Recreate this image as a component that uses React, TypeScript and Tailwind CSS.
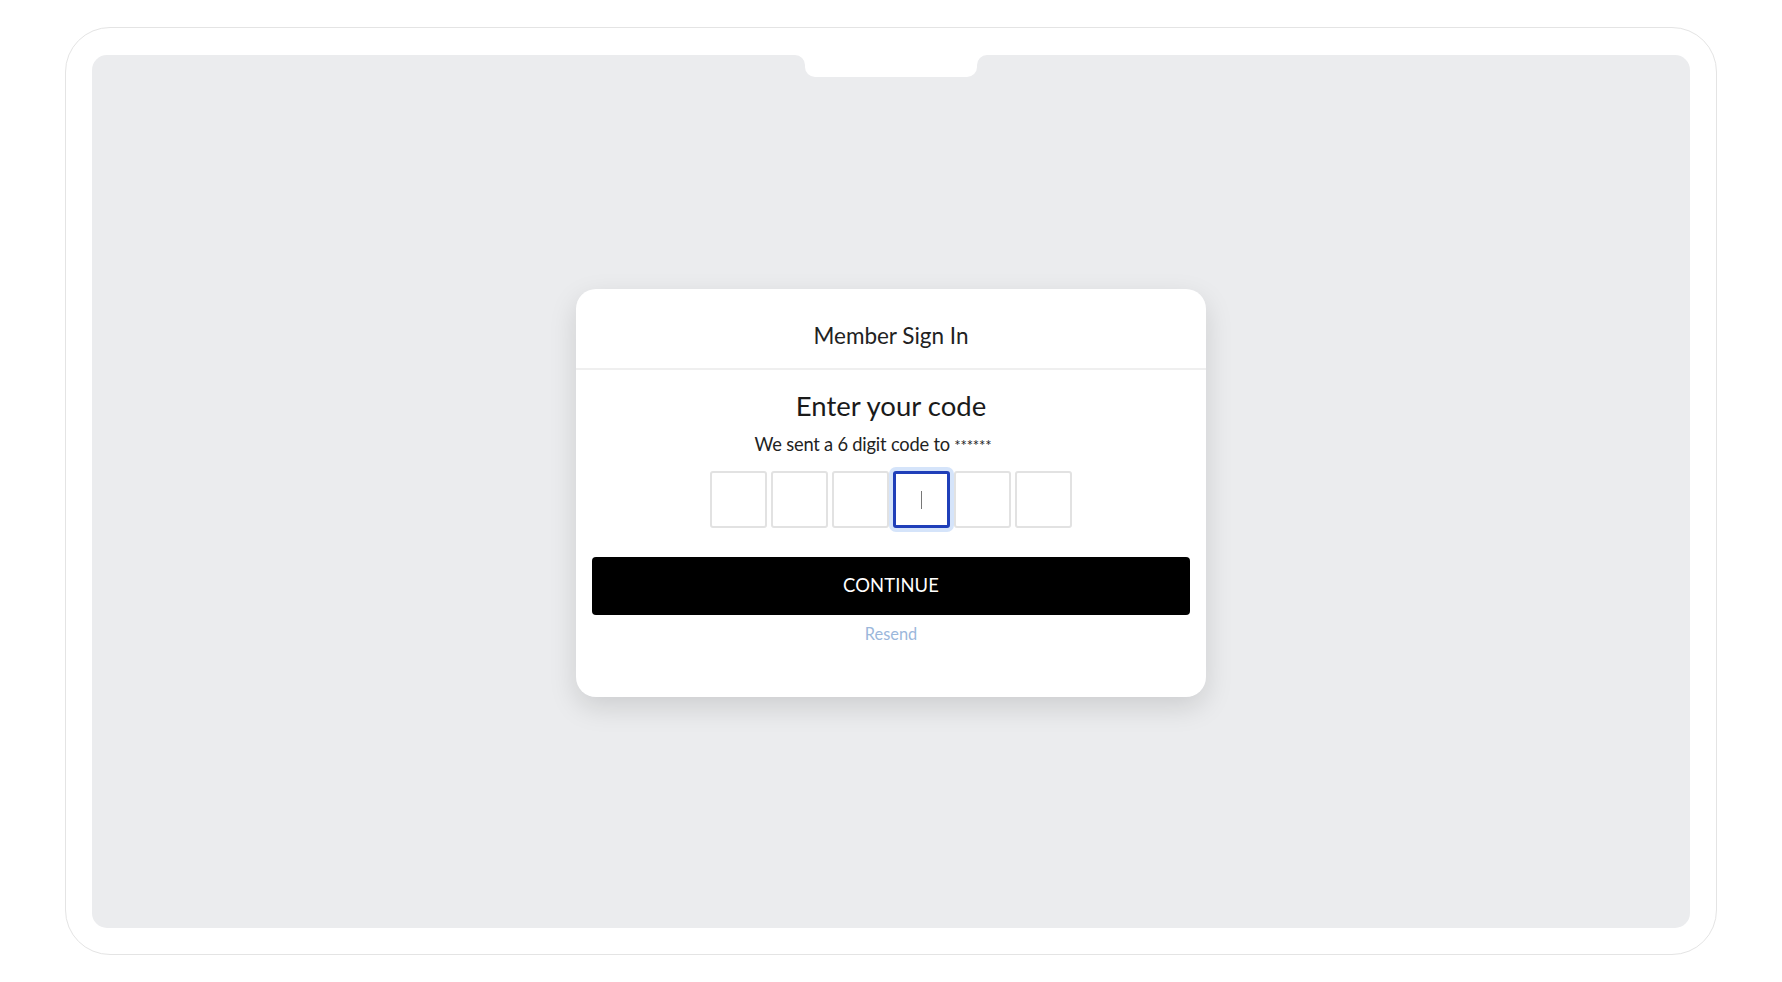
import { useState } from "react";

export default function App() {
  const [code] = useState(["", "", "", "", "", ""]);
  const active = 3;

  return (
    <div className="min-h-screen bg-white px-[65px] py-[27px] font-['Lato',sans-serif]">

      {/* DEVICE FRAME */}
      <div className="h-[928px] rounded-[45px] border border-[#e4e4e4] px-[26px] pt-[27px] pb-[26px]">

        {/* SCREEN */}
        <div className="relative h-full rounded-[15px] bg-[#ebecee] flex items-center justify-center">

          {/* NOTCH */}
          <div className="absolute top-0 left-1/2 -translate-x-1/2 w-[172px] h-[22px] bg-white rounded-b-[10px]">
            <div className="absolute top-0 -left-[10px] w-[10px] h-[10px] bg-white">
              <div className="w-full h-full bg-[#ebecee] rounded-tr-[10px]" />
            </div>
            <div className="absolute top-0 -right-[10px] w-[10px] h-[10px] bg-white">
              <div className="w-full h-full bg-[#ebecee] rounded-tl-[10px]" />
            </div>
          </div>

          {/* CARD */}
          <div className="mt-[3px] w-[630px] h-[408px] bg-white rounded-[20px] shadow-[0_10px_28px_rgba(0,0,0,0.13)] flex flex-col">

            {/* HEADER */}
            <div className="pt-[33px] pb-[19px] border-b-2 border-[#efefef] text-center text-[22.5px] leading-[27px] text-[#222]">
              Member Sign In
            </div>

            {/* BODY */}
            <div className="px-[16px] flex flex-col items-center">
              <h2 className="mt-[19px] text-[27.5px] leading-[33px] text-[#1a1a1a]">
                Enter your code
              </h2>
              <p className="mt-[11px] mr-[36px] text-[18.3px] leading-[22px] text-[#222] tracking-[-0.2px]">
                We sent a 6 digit code to <span className="text-[15px]">******</span>
              </p>

              {/* CODE INPUTS */}
              <div className="mt-[15px] flex gap-[4px]">
                {code.map((v, i) =>
                  i === active ? (
                    <div
                      key={i}
                      className="w-[57px] h-[57px] rounded-[3px] border-[3px] border-[#1f3fb9] ring-4 ring-[#d5e4fa] bg-white flex items-center justify-center"
                    >
                      <div className="w-px h-[18px] bg-[#777]" />
                    </div>
                  ) : (
                    <div
                      key={i}
                      className="w-[57px] h-[57px] rounded-[3px] border-2 border-[#e2e2e2] bg-white flex items-center justify-center text-xl"
                    >
                      {v}
                    </div>
                  )
                )}
              </div>

              {/* CONTINUE */}
              <button className="mt-[29px] w-full h-[58px] bg-black rounded-[4px] text-white text-[18.4px] tracking-[0.1px]">
                CONTINUE
              </button>

              <button className="mt-[9px] text-[16.4px] leading-[20px] text-[#9bb7db]">
                Resend
              </button>
            </div>
          </div>
        </div>
      </div>
    </div>
  );
}
